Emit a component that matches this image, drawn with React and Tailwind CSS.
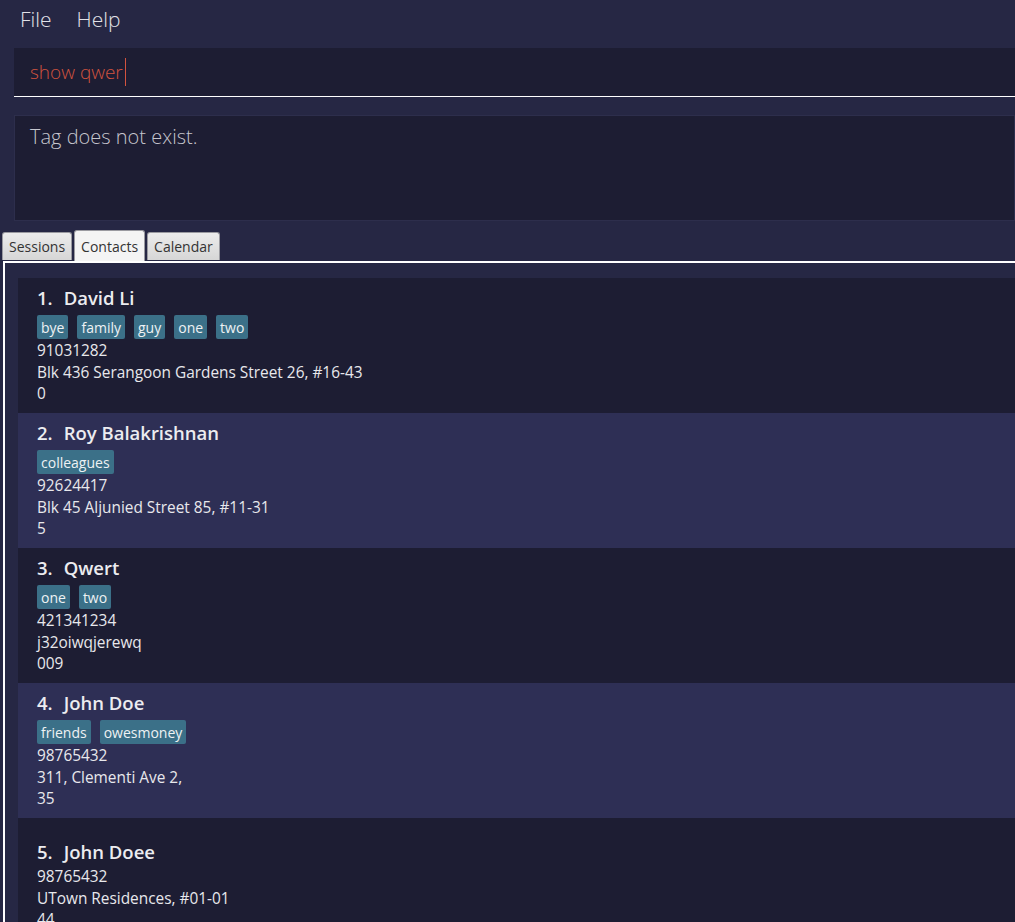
import React from 'react';

const contacts = [
  { name: 'David Li', tags: ['bye', 'family', 'guy', 'one', 'two'], phone: '91031282', address: 'Blk 436 Serangoon Gardens Street 26, #16-43', extra: '0' },
  { name: 'Roy Balakrishnan', tags: ['colleagues'], phone: '92624417', address: 'Blk 45 Aljunied Street 85, #11-31', extra: '5' },
  { name: 'Qwert', tags: ['one', 'two'], phone: '421341234', address: 'j32oiwqjerewq', extra: '009' },
  { name: 'John Doe', tags: ['friends', 'owesmoney'], phone: '98765432', address: '311, Clementi Ave 2,', extra: '35' },
  { name: 'John Doee', tags: [], phone: '98765432', address: 'UTown Residences, #01-01', extra: '44' },
];

const ContactCard = ({ contact, index }) => {
  const odd = index % 2 === 1;
  return (
    <div className={`h-[135px] flex flex-col justify-center pl-[19px] ${odd ? 'bg-[#2e2f55]' : 'bg-[#1d1d33]'}`}>
      <div className="h-[24px] flex items-center text-[18.5px] font-semibold text-[#ececf0]">
        <span>{index + 1}.</span>
        <span className="ml-[11px]">{contact.name}</span>
      </div>
      {contact.tags.length > 0 ? (
        <div className="mt-[5px] mb-[1px] flex gap-[9px]">
          {contact.tags.map((tag) => (
            <span key={tag} className="h-[24px] px-[4px] flex items-center rounded-[2px] bg-[#3b7088] text-[14px] text-[#eef2f4]">
              {tag}
            </span>
          ))}
        </div>
      ) : (
        <div className="h-[2px]" />
      )}
      <div className="text-[15.4px] leading-[21.5px] text-[#e8e8ec]">
        <div>{contact.phone}</div>
        <div>{contact.address}</div>
        <div>{contact.extra}</div>
      </div>
    </div>
  );
};

const Tab = ({ label, active }) => (
  <div
    className={`px-[6px] flex items-center border border-b-0 border-[#9a9aa0] rounded-t-[3px] text-[14px] text-[#333] ${
      active ? 'h-[31px] bg-[#f4f4f4]' : 'h-[28px] mb-[1px] bg-gradient-to-b from-[#ececec] to-[#d6d6d6]'
    }`}
  >
    {label}
  </div>
);

export default function App() {
  return (
    <div className="h-[922px] w-full overflow-hidden bg-[#262744] font-['Open_Sans','Noto_Sans',sans-serif]">
      {/* menu bar */}
      <div className="h-[40px] flex items-center pl-[20px] gap-[25px] text-[21px] text-[#e2e2e8] font-light">
        <span>File</span>
        <span>Help</span>
      </div>

      {/* command box */}
      <div className="mt-[8px] ml-[14px] h-[49px] bg-[#1d1d33] border-b border-white flex items-center pl-[16px] text-[19px] font-light text-[#d2533f]">
        <span>show qwer</span>
        <span className="ml-[2px] w-[1px] h-[28px] bg-[#d2533f]" />
      </div>

      {/* result display */}
      <div className="mt-[18px] ml-[14px] h-[106px] bg-[#1d1d33] border border-[#2d2e4c] pl-[15px] pt-[6px] text-[20px] font-light text-[#c6c6ce]">
        Tag does not exist.
      </div>

      {/* tabs */}
      <div className="mt-[9px] pl-[2px] flex items-end gap-[2px]">
        <Tab label="Sessions" />
        <Tab label="Contacts" active />
        <Tab label="Calendar" />
      </div>

      {/* contacts list */}
      <div className="ml-[3px] border-l-2 border-t-2 border-white pt-[15px] pl-[13px]">
        {contacts.map((c, i) => (
          <ContactCard key={c.name} contact={c} index={i} />
        ))}
      </div>
    </div>
  );
}
